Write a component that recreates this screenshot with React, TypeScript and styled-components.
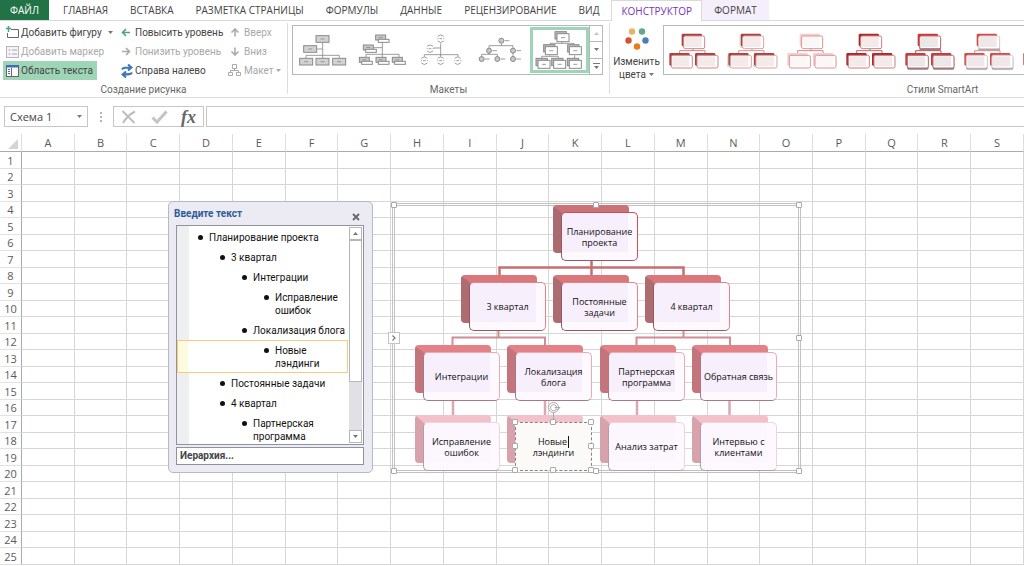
import React from 'react';
import styled, { createGlobalStyle, css } from 'styled-components';

const GlobalStyle = createGlobalStyle`
  *, *::before, *::after { box-sizing: border-box; }
  body { margin: 0; background: #fff; color: #444; font: 11px/14px 'Open Sans', 'Noto Sans', sans-serif; }
  button, input { font: inherit; color: inherit; margin: 0; padding: 0; border: 0; background: none; }
  ul { list-style: none; margin: 0; padding: 0; }
  svg { display: block; flex: none; }
`;

const Window = styled.div`
  display: flex;
  flex-direction: column;
  height: 100vh;
  overflow: hidden;
`;

/* ---------- Ribbon tabs ---------- */

const TabBar = styled.nav`
  display: flex;
  flex: none;
  height: 21px;
  border-bottom: 1px solid #dadada;
`;

const Tab = styled.button<{ $kind?: 'file' | 'active' | 'context' }>`
  flex: none;
  height: 20px;
  padding: 0 11px;
  font-size: 10px;
  white-space: nowrap;
  ${p => p.$kind === 'file' && css`
    width: 49px;
    margin-right: 3px;
    padding: 0;
    background: #217346;
    color: #fff;
  `}
  ${p => p.$kind === 'active' && css`
    height: 21px;
    padding: 0 9px;
    margin-left: 1px;
    background: #fff;
    border: 1px solid #dadada;
    border-bottom: 0;
    color: #7436b8;
  `}
  ${p => p.$kind === 'context' && css`
    padding: 0 12px;
    background: #f5effc;
  `}
`;

/* ---------- Ribbon ---------- */

const Ribbon = styled.div`
  display: flex;
  flex: none;
  height: 77px;
  padding-top: 2px;
  overflow: hidden;
  border-bottom: 1px solid #dcdcdc;
  font-family: Roboto, 'Noto Sans', sans-serif;
  font-size: 10px;
`;

const Group = styled.section<{ $width: number }>`
  display: flex;
  flex-direction: column;
  flex: none;
  width: ${p => p.$width}px;
  height: 71px;
  border-right: 1px solid #dedede;
`;

const GroupBody = styled.div<{ $inset?: number }>`
  display: flex;
  flex: none;
  height: 60px;
  padding-left: ${p => p.$inset ?? 0}px;
`;

const GroupTitle = styled.h2`
  flex: none;
  margin: 0;
  font-size: 10px;
  line-height: 14px;
  font-weight: 400;
  text-align: center;
  color: #666;
`;

const CommandColumn = styled.div<{ $width: number }>`
  display: flex;
  flex-direction: column;
  align-items: flex-start;
  width: ${p => p.$width}px;
`;

const Command = styled.button<{ $on?: boolean }>`
  display: flex;
  align-items: center;
  gap: 2px;
  height: 19px;
  padding: 0 4px 0 3px;
  white-space: nowrap;
  background: ${p => (p.$on ? '#9fd5b7' : 'transparent')};
  &:disabled { color: #a8a8a8; }
`;

const SplitCaret = styled.span`
  margin-left: 4px;
`;

const Gallery = styled.div<{ $width?: number }>`
  display: flex;
  flex: none;
  ${p => p.$width && css`width: ${p.$width}px;`}
  height: 50px;
  margin-top: 2px;
  border: 1px solid #b4b9bd;
`;

const GalleryItem = styled.button<{ $fixed?: boolean; $on?: boolean }>`
  display: flex;
  align-items: center;
  justify-content: center;
  flex: ${p => (p.$fixed ? 'none' : '1 1 59px')};
  width: 59px;
  min-width: 0;
  height: 48px;
  overflow: hidden;
  ${p => p.$on && css`
    height: 46px;
    margin-top: 1px;
    border: 3px solid #9fd5b7;
  `}
`;

const GalleryScroll = styled.div`
  display: flex;
  flex: none;
  flex-direction: column;
  width: 13px;
  border-left: 1px solid #b4b9bd;
`;

const ScrollButton = styled.button`
  display: flex;
  flex: 1;
  align-items: center;
  justify-content: center;
  & + & { border-top: 1px solid #b4b9bd; }
`;

const ColorsButton = styled.button`
  display: flex;
  flex-direction: column;
  align-items: center;
  flex: none;
  width: 53px;
  line-height: 13px;
`;

const CaptionLine = styled.span`
  display: flex;
  align-items: center;
  gap: 3px;
`;

const ColorsArt = styled.span`
  padding: 5px 0 4px;
`;

/* ---------- Formula bar ---------- */

const FormulaBar = styled.div`
  display: flex;
  flex: none;
  align-items: center;
  height: 21px;
  margin: 8px 0 7px 4px;
`;

const NameBox = styled.div`
  display: flex;
  width: 84px;
  height: 21px;
  border: 1px solid #c6c6c6;
`;

const NameInput = styled.input`
  flex: 1;
  min-width: 0;
  padding-left: 5px;
`;

const NameToggle = styled.button`
  display: grid;
  place-items: center;
  width: 16px;
`;

const Dots = styled.div`
  display: grid;
  place-items: center;
  width: 25px;
`;

const FormulaActions = styled.div`
  display: flex;
  align-items: center;
  justify-content: space-between;
  width: 91px;
  height: 21px;
  padding: 0 7px;
  border: 1px solid #c6c6c6;
`;

const FxButton = styled.button`
  font: italic bold 18px/18px 'Liberation Serif', serif;
  color: #666;
`;

const FormulaInput = styled.input`
  flex: 1;
  min-width: 0;
  height: 21px;
  margin-left: 2px;
  padding: 0 6px;
  border: 1px solid #c6c6c6;
  border-right: 0;
`;

/* ---------- Sheet ---------- */

const Sheet = styled.main`
  position: relative;
  flex: 1;
  min-height: 0;
  overflow: hidden;
`;

const Grid = styled.table`
  width: 100%;
  table-layout: fixed;
  border-collapse: separate;
  border-spacing: 0;
  color: #5a5a5a;
  th { font-weight: 400; padding: 0; }
  td { padding: 0; border-right: 1px solid #d6d6d6; border-bottom: 1px solid #d6d6d6; }
`;

const ColumnHead = styled.th`
  height: 18px;
  border-right: 1px solid #dedede;
  border-bottom: 1px solid #ababab;
`;

const Corner = styled.th`
  width: 22px;
  border-right: 1px solid #dedede;
  border-bottom: 1px solid #ababab;
  svg { margin: 2px 0 0 8px; }
`;

const RowHead = styled.th`
  border-right: 1px solid #ababab;
  border-bottom: 1px solid #e2e2e2;
  line-height: 15px;
`;

const Row = styled.tr`
  height: 16px;
  &:nth-child(odd) { height: 17px; }
`;

/* ---------- Text pane ---------- */

const Pane = styled.aside`
  position: absolute;
  left: 168px;
  top: 67px;
  display: flex;
  flex-direction: column;
  width: 205px;
  height: 272px;
  padding: 4px 8px 7px 7px;
  border: 1px solid #afbcc2;
  border-radius: 5px;
  background: #ecebf3;
  color: #111;
  font: 10px/14px Roboto, 'Noto Sans', sans-serif;
`;

const PaneHeader = styled.header`
  display: flex;
  justify-content: space-between;
  height: 20px;
  margin-left: -2px;
`;

const PaneTitle = styled.h2`
  margin: 0;
  font: 700 10px/15px Roboto, 'Noto Sans', sans-serif;
  color: #2b5c97;
`;

const CloseButton = styled.button`
  width: 16px;
  display: grid;
  place-items: center;
  padding-top: 3px;
`;

const Outline = styled.div`
  display: flex;
  height: 220px;
  border: 1px solid #8f939b;
  background: #fff;
`;

const OutlineList = styled.ul`
  flex: 1;
  min-width: 0;
  height: 218px;
  padding-top: 1px;
  overflow: hidden;
  background: linear-gradient(90deg, #efeff1 12px, #fff 12px);
`;

const OutlineItem = styled.li<{ $level: number; $on?: boolean }>`
  display: flex;
  gap: 6px;
  padding: 4px 0 3px ${p => 21 + p.$level * 22}px;
  line-height: 13px;
  white-space: pre-line;
  ${p => p.$on && css`
    padding: 3px 0 2px ${20 + p.$level * 22}px;
    border: 1px solid #fbcb7d;
    background: linear-gradient(90deg, #fffbe1 10px, #fff 10px);
  `}
  &::before {
    content: '';
    flex: none;
    width: 5px;
    height: 5px;
    margin-top: 4px;
    border-radius: 3px;
    background: #111;
  }
`;

const Scrollbar = styled.div`
  display: flex;
  flex-direction: column;
  width: 13px;
  margin: 1px;
  background: #e1e0e7;
`;

const ScrollStep = styled.button`
  display: grid;
  place-items: center;
  flex: none;
  height: 13px;
  border: 1px solid #b5b5bb;
  background: #fff;
`;

const Thumb = styled.div`
  height: 142px;
  margin-bottom: auto;
  border: 1px solid #b5b5bb;
  background: #fff;
`;

const LayoutName = styled.div`
  height: 18px;
  margin-top: 2px;
  padding-left: 3px;
  border: 1px solid #8f939b;
  background: #fff;
  line-height: 16px;
  font-weight: 700;
  color: #444;
`;

/* ---------- SmartArt canvas ---------- */

const Canvas = styled.figure`
  position: absolute;
  left: 392px;
  top: 69px;
  width: 409px;
  height: 270px;
  margin: 0;
  border: 3px double #c2c2c2;
`;

const Links = styled.svg`
  position: absolute;
  left: -3px;
  top: -3px;
`;

const palette = [
  { top: '#cb7277', side: '#a96a70', face: '#c47a80', edge: '#c4535b', low: '#9d5660' },
  { top: '#d9777b', side: '#ad6c72', face: '#c97c82', edge: '#e58389', low: '#9d5660' },
  { top: '#e28186', side: '#c4757b', face: '#d98489', edge: '#efaab1', low: '#a87886' },
  { top: '#f3c1c9', side: '#d7a2ab', face: '#eab6bf', edge: '#f6d0da', low: '#b79ba8' },
];

const NodeShape = styled.div<{ $x: number; $level: number }>`
  position: absolute;
  left: ${p => p.$x}px;
  top: ${p => p.$level * 70 - 1}px;
  width: 84px;
  height: 56px;
  padding: 7px 0 0 8px;
  &::before {
    content: '';
    position: absolute;
    left: 0;
    top: 0;
    width: 76px;
    height: 48px;
    border-style: solid;
    border-width: 8px 1px 1px 9px;
    border-color: ${p => { const c = palette[p.$level]; return `${c.top} ${c.top} ${c.side} ${c.side}`; }};
    border-radius: 4px;
    background: ${p => palette[p.$level].face};
  }
`;

const NodeFace = styled.div<{ $level: number; $on?: boolean }>`
  position: relative;
  display: grid;
  place-items: center;
  width: 77px;
  height: 49px;
  border: 1px solid ${p => palette[p.$level].edge};
  border-bottom-color: ${p => palette[p.$level].low};
  border-left-color: ${p => palette[p.$level].low};
  border-radius: 5px;
  background: linear-gradient(${p => (p.$level === 3 ? '#fcf6fe, #fcf6fe' : '#f8effd, #f8effd')}) 0 0 / 66px 39px no-repeat #fdf9ff;
  color: #111;
  font: 9px/11px 'Open Sans', 'Noto Sans', sans-serif;
  text-align: center;
  white-space: pre-line;
  ${p => p.$on && css`
    border: 1px dashed #8c7f82;
    border-radius: 0;
    background: #fbfaf8;
  `}
`;

const Cursor = styled.span`
  display: inline-block;
  width: 1px;
  height: 12px;
  margin: -1px 0 -3px 1px;
  background: #111;
`;

const Handle = styled.span<{ $x: number; $y: number }>`
  position: absolute;
  left: ${p => p.$x}px;
  top: ${p => p.$y}px;
  width: 6px;
  height: 6px;
  border: 1px solid #a9a9a9;
  border-radius: 1px;
  background: #fff;
`;

const PaneToggle = styled.button`
  position: absolute;
  left: -7px;
  top: 126px;
  display: grid;
  place-items: center;
  width: 12px;
  height: 12px;
  border: 1px solid #c4c4c4;
  background: #fff;
`;

const Rotate = styled.svg`
  position: absolute;
  left: 31px;
  top: -22px;
`;

/* ---------- Icons ---------- */

const Caret = ({ color = '#777', up = false }: { color?: string; up?: boolean }) => (
  <svg width="5" height="3" viewBox="0 0 5 3"><path d={up ? 'M0 3h5L2.5 0z' : 'M0 0h5L2.5 3z'} fill={color} /></svg>
);

const AddShapeIcon = () => (
  <svg width="13" height="13" viewBox="0 0 13 13" fill="none">
    <path d="M5 3.5h7.500v8h-11V7" stroke="#666" />
    <path d="M2.500 0v6M0 2.500h5" stroke="#4aa583" strokeWidth="1.500" />
  </svg>
);

const AddBulletIcon = () => (
  <svg width="13" height="12" viewBox="0 0 13 12" fill="none">
    <rect x=".5" y=".5" width="12" height="11" fill="#f6f3f8" stroke="#b9b4bd" />
    <path d="M2.500 4h2M2.500 8h2M6 4h5M6 8h5" stroke="#aaa5ae" strokeWidth="1.200" />
  </svg>
);

const TextPaneIcon = () => (
  <svg width="13" height="12" viewBox="0 0 13 12" fill="none">
    <rect x=".5" y=".5" width="12" height="11" fill="#fff" stroke="#666" />
    <path d="M0 0h13v2.500H0z" fill="#3e6fae" />
    <path d="M2 4.500h2M2 6.500h2M2 8.500h2" stroke="#3e6fae" />
    <path d="M5.500 3v8" stroke="#666" />
  </svg>
);

const ArrowIcon = ({ turn, color, wide }: { turn: number; color: string; wide?: boolean }) => (
  <svg width={wide ? 14 : 12} height="9" viewBox={wide ? '0 0 14 9' : '2 0 12 9'} fill="none" stroke={color} strokeWidth="1.600">
    <path transform={`rotate(${turn} 7 4.500)`} d="M3.500 4.500h7.500M7 1L3.500 4.500 7 8" />
  </svg>
);

const SwapIcon = () => (
  <svg width="12" height="14" viewBox="1 0 12 14" fill="none" stroke="#3e78b8" strokeWidth="2">
    <path d="M2 5.500C3 3.500 5 3.500 11 3.500M8 .5l3.500 3L8 6.500" />
    <path d="M12 8.500c-1 2-3 2-9 2M6 7.500l-3.500 3L6 13.500" />
  </svg>
);

const HierarchyIcon = () => (
  <svg width="14" height="13" viewBox="0 0 14 13" fill="none" stroke="#aaa">
    <path d="M4.500.5h4v4h-4zM.5 8.500h4v3h-4zM8.500 8.500h4v3h-4zM6.500 4.500v2M2.500 8.500v-2h8v2" />
  </svg>
);

const PaletteIcon = () => (
  <svg width="24" height="23" viewBox="0 0 24 23">
    <circle cx="7" cy="3.500" r="3.200" fill="#e8b564" />
    <circle cx="17" cy="3.500" r="3.200" fill="#64a790" />
    <circle cx="3.500" cy="12.500" r="3.200" fill="#d6532f" />
    <circle cx="20.500" cy="12.500" r="3.200" fill="#4a7fb8" />
    <circle cx="12" cy="18.500" r="3.200" fill="#e87b1e" />
  </svg>
);

type Pt = [number, number];

const Thumbnail = ({ x, children }: { x: number; children: React.ReactNode }) => (
  <svg width="52" height="44" viewBox={`${x} 84 156 132`} fill="none" stroke="#8a8a8a" strokeWidth="3">{children}</svg>
);

const Boxes = ({ at, w, h, fill, dash = true }: { at: Pt[]; w: number; h: number; fill: string; dash?: boolean }) => (
  <>
    {at.map(([x, y]) => (
      <g key={`${x}-${y}`}>
        <rect x={x} y={y} width={w} height={h} fill={fill} />
        {dash && <path d={`M${x + w / 2 - 6} ${y + h / 2}h12`} strokeWidth="2.500" />}
      </g>
    ))}
  </>
);

const layouts = [
  {
    name: 'Организационная диаграмма',
    art: (
      <Thumbnail x={50}>
        <path d="M127 128v46M109 147h18M77 174v-8h100v8" strokeWidth="2.500" />
        <Boxes at={[[107, 107], [70, 137], [58, 175], [107, 175], [157, 175]]} w={39} h={20} fill="#d2d2d2" />
      </Thumbnail>
    ),
  },
  {
    name: 'Диаграмма с именами и должностями',
    art: (
      <Thumbnail x={226}>
        <path d="M305 126v46M278 143h27M256 172v-9h99v9" strokeWidth="2.500" />
        <Boxes at={[[285, 105], [248, 135], [236, 172], [286, 172], [335, 172]]} w={30} h={15} fill="#c8c8c8" />
        <Boxes at={[[293, 118], [255, 148], [243, 184], [293, 184], [342, 184]]} w={32} h={9} fill="#fff" dash={false} />
      </Thumbnail>
    ),
  },
  {
    name: 'Полукруглая диаграмма',
    art: (
      <Thumbnail x={405}>
        <path d="M482 130v36M460 144h22M433 170v-6h101v6M482 164v6" strokeWidth="2.500" />
        {[[482, 116], [450, 146], [433, 182], [482, 182], [533, 182]].map(([x, y]) => (
          <path key={`${x}-${y}`} strokeWidth="2.500" d={`M${x - 9} ${y - 7}q9-9 18 0M${x - 9} ${y + 7}q9 9 18 0M${x - 10} ${y}h3M${x - 4} ${y}h8M${x + 8} ${y}h3`} />
        ))}
      </Thumbnail>
    ),
  },
  {
    name: 'Иерархия с круглыми рисунками',
    art: (
      <Thumbnail x={584}>
        <path d="M666 130v8M629 145v-8h72v8M629 158v6M607 170v-7h47v7M701 158v12" strokeWidth="2.500" />
        {[[666, 122], [629, 152], [701, 152], [607, 177], [654, 177], [701, 177]].map(([x, y]) => (
          <g key={`${x}-${y}`}><circle cx={x} cy={y} r="7.500" fill="#c8c8c8" /><path d={`M${x + 10} ${y}h14`} strokeWidth="2.500" /></g>
        ))}
      </Thumbnail>
    ),
  },
  {
    name: 'Иерархия',
    art: (
      <Thumbnail x={764}>
        <path d="M851 124v6M815 138v-8h72v8M815 166v4M790 176v-7h50v7M889 166v10" strokeWidth="2.500" />
        <Boxes at={[[830, 95], [796, 134], [868, 134], [773, 175], [820, 175], [867, 175]]} w={34} h={22} fill="#bdbdbd" dash={false} />
        <Boxes at={[[836, 101], [801, 140], [873, 140], [779, 181], [826, 181], [873, 181]]} w={36} h={24} fill="#fff" />
      </Thumbnail>
    ),
  },
];

type StyleLook = { name: string; back: string; face: string; line: string; edge: string; shadow?: string; light?: string };

const styleLooks: StyleLook[] = [
  { name: 'Простая заливка', back: '#a94040', face: '#f4eaea', line: '#d08485', edge: '#cf8889' },
  { name: 'Белый контур', back: '#a94040', face: '#f4eaea', line: '#d89495', edge: '#dba0a1', light: '#c9b8b8' },
  { name: 'Слабый эффект', back: '#f1cfd0', face: '#fbf7f7', line: '#d08485', edge: '#dd9293' },
  { name: 'Средний эффект', back: '#a62a2c', face: '#f4eaea', line: '#c96465', edge: '#d27c7d' },
  { name: 'Интенсивный эффект', back: '#c8393b', face: '#ece7e9', line: '#b55253', edge: '#bd6a6b', shadow: '#8d8387' },
  { name: 'Полировка', back: '#d04d4f', face: '#eee8ea', line: '#d08c8d', edge: '#e0c6c8', shadow: '#a89fa2' },
  { name: 'Вырезка', back: '#a94040', face: '#f4eaea', line: '#d08485', edge: '#c97879' },
];

const StyleArt = ({ look }: { look: StyleLook }) => {
  const tiles: Pt[] = [[245, 101], [208, 159], [285, 159]];
  return (
    <svg width="56" height="44" viewBox="198 84 168 132" fill="none">
      <path d="M279 146v7M239 160v-8h76v8" stroke={look.line} strokeWidth="3" />
      {tiles.map(([x, y]) => (
        <g key={x}>
          {look.light && <rect x={x - 3} y={y + 4} width="60" height="38" rx="5" fill={look.light} />}
          {look.light && <rect x={x - 2} y={y + 1} width="62" height="39" rx="5" fill="#fff" />}
          <rect x={x} y={y} width="61" height="38" rx="4" fill={look.back} />
          {look.shadow && <rect x={x + 5} y={y + 11} width="65" height="39" rx="5" fill={look.shadow} />}
          <rect x={x + 6} y={y + 7} width="63" height="38" rx="5" fill="#fff" stroke={look.edge} strokeWidth="3" />
          <rect x={x + 9} y={y + 10} width="51" height="30" fill={look.face} />
        </g>
      ))}
    </svg>
  );
};

/* ---------- Data ---------- */

const tabs = ['ГЛАВНАЯ', 'ВСТАВКА', 'РАЗМЕТКА СТРАНИЦЫ', 'ФОРМУЛЫ', 'ДАННЫЕ', 'РЕЦЕНЗИРОВАНИЕ', 'ВИД'];
const columns = 'ABCDEFGHIJKLMNOPQRS'.split('');
const rows = Array.from({ length: 25 }, (_, i) => i + 1);

const outline = [
  { level: 0, text: 'Планирование проекта' },
  { level: 1, text: '3 квартал' },
  { level: 2, text: 'Интеграции' },
  { level: 3, text: 'Исправление\nошибок' },
  { level: 2, text: 'Локализация блога' },
  { level: 3, text: 'Новые\nлэндинги', on: true },
  { level: 1, text: 'Постоянные задачи' },
  { level: 1, text: '4 квартал' },
  { level: 2, text: 'Партнерская\nпрограмма' },
];

const nodes = [
  { level: 0, x: 158, text: 'Планирование\nпроекта' },
  { level: 1, x: 66, text: '3 квартал' },
  { level: 1, x: 158, text: 'Постоянные\nзадачи' },
  { level: 1, x: 250, text: '4 квартал' },
  { level: 2, x: 20, text: 'Интеграции' },
  { level: 2, x: 112, text: 'Локализация\nблога' },
  { level: 2, x: 205, text: 'Партнерская\nпрограмма' },
  { level: 2, x: 297, text: 'Обратная связь' },
  { level: 3, x: 20, text: 'Исправление\nошибок' },
  { level: 3, x: 205, text: 'Анализ затрат' },
  { level: 3, x: 297, text: 'Интервью с\nклиентами' },
];

const canvasHandles: Pt[] = [[-4, -4], [198, -4], [401, -4], [401, 129], [401, 262], [198, 262], [-4, 262]];
const nodeHandles: Pt[] = [[-4, -4], [34, -4], [72, -4], [-4, 20], [72, 20], [-4, 44], [34, 44], [72, 44]];

export default function App() {
  return (
    <Window>
      <GlobalStyle />
      <TabBar>
        <Tab $kind="file">ФАЙЛ</Tab>
        {tabs.map(t => <Tab key={t}>{t}</Tab>)}
        <Tab $kind="active">КОНСТРУКТОР</Tab>
        <Tab $kind="context">ФОРМАТ</Tab>
      </TabBar>

      <Ribbon>
        <Group $width={288}>
          <GroupBody $inset={3}>
            <CommandColumn $width={115}>
              <Command><AddShapeIcon />Добавить фигуру<SplitCaret><Caret /></SplitCaret></Command>
              <Command disabled><AddBulletIcon />Добавить маркер</Command>
              <Command $on><TextPaneIcon />Область текста</Command>
            </CommandColumn>
            <CommandColumn $width={107}>
              <Command><ArrowIcon turn={0} color="#4aa583" />Повысить уровень</Command>
              <Command disabled><ArrowIcon turn={180} color="#aaa" />Понизить уровень</Command>
              <Command><SwapIcon />Справа налево</Command>
            </CommandColumn>
            <CommandColumn $width={60}>
              <Command disabled><ArrowIcon turn={90} color="#aaa" wide />Вверх</Command>
              <Command disabled><ArrowIcon turn={270} color="#aaa" wide />Вниз</Command>
              <Command disabled><HierarchyIcon />Макет <Caret color="#aaa" /></Command>
            </CommandColumn>
          </GroupBody>
          <GroupTitle>Создание рисунка</GroupTitle>
        </Group>

        <Group $width={322}>
          <GroupBody $inset={4}>
            <Gallery $width={311}>
              {layouts.map((l, i) => (
                <GalleryItem key={l.name} $on={i === 4} aria-label={l.name}>{l.art}</GalleryItem>
              ))}
              <GalleryScroll>
                <ScrollButton aria-label="Предыдущая строка"><Caret up color="#c4c4c4" /></ScrollButton>
                <ScrollButton aria-label="Следующая строка"><Caret /></ScrollButton>
                <ScrollButton aria-label="Все макеты">
                  <svg width="7" height="6" viewBox="0 0 7 6"><path d="M0 0h7v1H0zM1 3h5L3.500 6z" fill="#777" /></svg>
                </ScrollButton>
              </GalleryScroll>
            </Gallery>
          </GroupBody>
          <GroupTitle>Макеты</GroupTitle>
        </Group>

        <Group $width={666}>
          <GroupBody>
            <ColorsButton>
              <ColorsArt><PaletteIcon /></ColorsArt>
              <CaptionLine>Изменить</CaptionLine>
              <CaptionLine>цвета <Caret /></CaptionLine>
            </ColorsButton>
            <Gallery>
              {styleLooks.map(s => (
                <GalleryItem key={s.name} $fixed aria-label={s.name}><StyleArt look={s} /></GalleryItem>
              ))}
            </Gallery>
          </GroupBody>
          <GroupTitle>Стили SmartArt</GroupTitle>
        </Group>
      </Ribbon>

      <FormulaBar>
        <NameBox>
          <NameInput aria-label="Имя" defaultValue="Схема 1" />
          <NameToggle aria-label="Список имён"><Caret /></NameToggle>
        </NameBox>
        <Dots>
          <svg width="2" height="10" viewBox="0 0 2 10"><path d="M0 0h2v2H0zM0 4h2v2H0zM0 8h2v2H0z" fill="#b5b5b5" /></svg>
        </Dots>
        <FormulaActions>
          <button aria-label="Отмена">
            <svg width="16" height="14" viewBox="0 0 16 14" fill="none" stroke="#bdbdbd" strokeWidth="2"><path d="M1.500 1l12 12M14 1.500C9 4 5 8 2 13" /></svg>
          </button>
          <button aria-label="Ввод">
            <svg width="17" height="14" viewBox="0 0 17 14" fill="none" stroke="#c4c4c4" strokeWidth="3"><path d="M1.500 7.500L6 12 15.500 1.500" /></svg>
          </button>
          <FxButton aria-label="Вставить функцию">fx</FxButton>
        </FormulaActions>
        <FormulaInput aria-label="Строка формул" />
      </FormulaBar>

      <Sheet>
        <Grid>
          <thead>
            <tr>
              <Corner><svg width="10" height="10" viewBox="0 0 10 10"><path d="M10 0v10H0z" fill="#d4d4d4" /></svg></Corner>
              {columns.map(c => <ColumnHead key={c} scope="col">{c}</ColumnHead>)}
            </tr>
          </thead>
          <tbody>
            {rows.map(r => (
              <Row key={r}>
                <RowHead scope="row">{r}</RowHead>
                {columns.map(c => <td key={c} />)}
              </Row>
            ))}
          </tbody>
        </Grid>

        <Pane>
          <PaneHeader>
            <PaneTitle>Введите текст</PaneTitle>
            <CloseButton aria-label="Закрыть">
              <svg width="8" height="8" viewBox="0 0 8 8" stroke="#666" strokeWidth="1.800"><path d="M1 1l6 6M7 1L1 7" /></svg>
            </CloseButton>
          </PaneHeader>
          <Outline>
            <OutlineList>
              {outline.map(o => <OutlineItem key={o.text} $level={o.level} $on={o.on}>{o.text}</OutlineItem>)}
            </OutlineList>
            <Scrollbar>
              <ScrollStep aria-label="Вверх"><Caret up /></ScrollStep>
              <Thumb />
              <ScrollStep aria-label="Вниз"><Caret /></ScrollStep>
            </Scrollbar>
          </Outline>
          <LayoutName>Иерархия...</LayoutName>
        </Pane>

        <Canvas>
          <Links width="409" height="270" viewBox="392 203 409 270" fill="none">
            <path d="M591.500 260v15M499.500 275v-7.500h184v7.500" stroke="#c76d70" strokeWidth="2.500" />
            <path d="M498.500 330v7M452.500 345v-7.500h92.500v7.500M683.500 330v7M636.500 345v-7.500h93.500v7.500" stroke="#cf8d95" strokeWidth="2" />
            <path d="M453 400v16M545 400v16M637 400v16M729.500 400v16" stroke="#d9a8b2" strokeWidth="2.500" />
          </Links>
          {nodes.map(n => (
            <NodeShape key={n.text} $x={n.x} $level={n.level}>
              <NodeFace $level={n.level}><span>{n.text}</span></NodeFace>
            </NodeShape>
          ))}
          <NodeShape $x={112} $level={3}>
            <NodeFace $level={3} $on>
              <span>Новые<Cursor />{'\n'}лэндинги</span>
              <Rotate width="14" height="22" viewBox="0 0 14 22" fill="none" stroke="#a8a8a8">
                <circle cx="6.500" cy="6.500" r="5" fill="#fff" />
                <path d="M9 8.500a3 3 0 1 1 .5-2.500M8 6.500h5l-2.500 2.500zM6.500 11.500V22" />
              </Rotate>
              {nodeHandles.map(([x, y]) => <Handle key={`${x}${y}`} $x={x} $y={y} />)}
            </NodeFace>
          </NodeShape>
          {canvasHandles.map(([x, y]) => <Handle key={`${x}${y}`} $x={x} $y={y} />)}
          <PaneToggle aria-label="Область текста">
            <svg width="4" height="6" viewBox="0 0 4 6" fill="none" stroke="#777" strokeWidth="1.200"><path d="M.5.5L3 3 .5 5.500" /></svg>
          </PaneToggle>
        </Canvas>
      </Sheet>
    </Window>
  );
}
